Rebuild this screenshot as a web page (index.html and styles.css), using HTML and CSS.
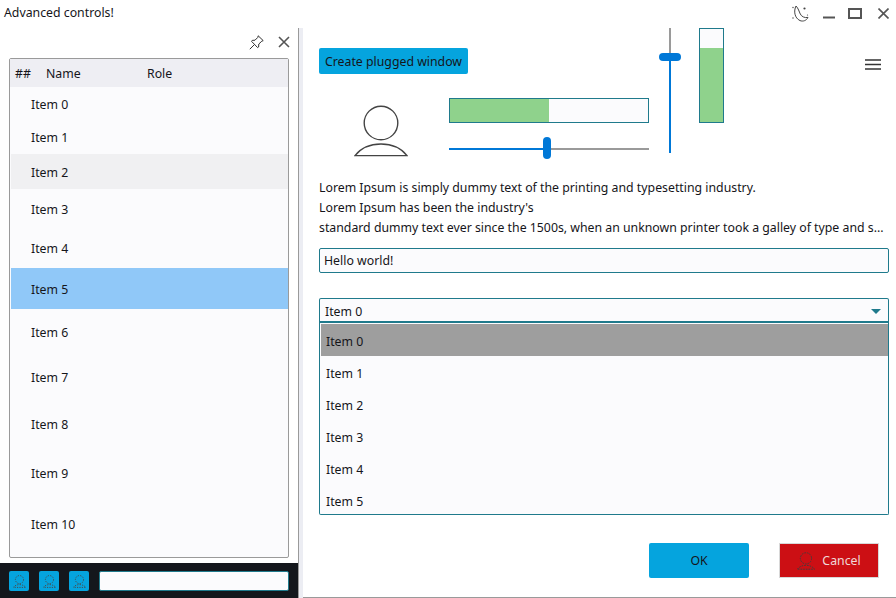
FILE: index.html
```html
<!DOCTYPE html>
<html lang="en">
<head>
    <meta charset="UTF-8">
    <meta name="viewport" content="width=device-width, initial-scale=1.0">
    <title>Advanced controls!</title>
    <link rel="stylesheet" href="styles.css">
</head>
<body>
    <svg class="defs" width="0" height="0">
        <symbol id="person" viewBox="0 0 54 52">
            <circle cx="27" cy="18" r="16.8"/>
            <path d="M1 50.6 C7 43 16 39 27 39 C38 39 47 43 53 50.6 Z"/>
        </symbol>
    </svg>

    <header class="titlebar">
        <span class="title">Advanced controls!</span>
        <div class="window-icons">
            <svg class="moon" width="17" height="17" viewBox="0 0 17 17">
                <path d="M4 1 C1.5 6 2.5 13 8 15.6 C11 16.8 14.5 15.6 16 12.4 C12.5 13.2 9.5 11.5 8.3 9 C7 6.5 6.5 3.5 4 1 Z"/>
                <circle cx="12.5" cy="3.5" r="1.1" class="dot"/>
                <circle cx="1" cy="2.5" r=".7" class="dot"/>
                <circle cx="1" cy="13" r=".7" class="dot"/>
                <circle cx="15.5" cy="10" r=".6" class="dot"/>
            </svg>
            <svg class="win-min" width="12" height="3" viewBox="0 0 12 3"><path d="M0 1.5 H12"/></svg>
            <svg class="win-max" width="14" height="11" viewBox="0 0 14 11"><rect x="1" y="1" width="12" height="9"/></svg>
            <svg class="win-close" width="11" height="11" viewBox="0 0 11 11"><path d="M.5 .5 L10.5 10.5 M10.5 .5 L.5 10.5"/></svg>
        </div>
    </header>

    <main class="main">
        <aside class="side">
            <div class="side-tools">
                <svg class="pin" width="15" height="15" viewBox="0 0 15 15">
                    <path d="M9.2 .8 L14.2 5.6 L12.8 6.2 L9.8 9 L9.6 12 L8.6 12.6 L2.6 6.4 L3.2 5.4 L6 5.2 L8.8 2.4 Z M5.2 9.8 L.8 14.2"/>
                </svg>
                <svg class="side-close" width="12" height="12" viewBox="0 0 12 12"><path d="M1 1 L11 11 M11 1 L1 11"/></svg>
            </div>
            <div class="table">
                <div class="table-head">
                    <span class="col-id">##</span>
                    <span class="col-name">Name</span>
                    <span class="col-role">Role</span>
                </div>
                <ul class="table-body">
                    <li>Item 0</li>
                    <li>Item 1</li>
                    <li class="hover">Item 2</li>
                    <li>Item 3</li>
                    <li>Item 4</li>
                    <li class="selected">Item 5</li>
                    <li>Item 6</li>
                    <li>Item 7</li>
                    <li>Item 8</li>
                    <li>Item 9</li>
                    <li>Item 10</li>
                </ul>
            </div>
            <div class="side-footer">
                <button class="icon-btn"><svg width="13" height="13"><use href="#person"/></svg></button>
                <button class="icon-btn"><svg width="13" height="13"><use href="#person"/></svg></button>
                <button class="icon-btn"><svg width="13" height="13"><use href="#person"/></svg></button>
                <input class="field footer-input" type="text">
            </div>
        </aside>

        <div class="splitter"></div>

        <section class="content">
            <div class="top">
                <div class="top-left">
                    <button class="primary plug-btn">Create plugged window</button>
                    <div class="widgets">
                        <svg class="avatar" width="54" height="52"><use href="#person"/></svg>
                        <div class="bars">
                            <div class="progress"><div class="progress-fill"></div></div>
                            <div class="hslider"><div class="hslider-done"></div><div class="hslider-thumb"></div></div>
                        </div>
                    </div>
                </div>
                <div class="vslider"><div class="vslider-thumb"></div></div>
                <div class="vprogress"><div class="vprogress-fill"></div></div>
                <svg class="menu" width="16" height="11" viewBox="0 0 16 11"><path d="M0 1 H16 M0 5.5 H16 M0 10 H16"/></svg>
            </div>

            <div class="lorem">
                <p>Lorem Ipsum is simply dummy text of the printing and typesetting industry.</p>
                <p>Lorem Ipsum has been the industry's</p>
                <p>standard dummy text ever since the 1500s, when an unknown printer took a galley of type and s...</p>
            </div>

            <input class="field hello" type="text" value="Hello world!">

            <div class="combo">
                <span>Item 0</span>
                <span class="caret"></span>
            </div>
            <ul class="combo-list">
                <li class="current">Item 0</li>
                <li>Item 1</li>
                <li>Item 2</li>
                <li>Item 3</li>
                <li>Item 4</li>
                <li>Item 5</li>
            </ul>

            <div class="actions">
                <button class="primary ok">OK</button>
                <button class="cancel"><svg width="18" height="18"><use href="#person"/></svg>Cancel</button>
            </div>
        </section>
    </main>
</body>
</html>
```

FILE: styles.css
```css
* {
    box-sizing: border-box;
}
html, body {
    height: 100%;
}
body {
    margin: 0;
    background: #ffffff;
    color: #15151a;
    font-family: "Noto Sans", "Open Sans", sans-serif;
    font-size: 12.3px;
    overflow: hidden;
}
.defs {
    display: block;
    height: 0;
}
svg {
    display: block;
    fill: none;
    stroke: #444;
}
symbol {
    overflow: visible;
}
button, input {
    font: inherit;
    color: inherit;
}
ul {
    list-style: none;
    margin: 0;
    padding: 0;
}
p {
    margin: 0;
}

/* Title bar */
.titlebar {
    height: 28px;
    display: flex;
    justify-content: space-between;
    padding: 5px 7px 0 4px;
}
.title {
    line-height: 16px;
}
.window-icons {
    display: flex;
    align-items: flex-start;
}
.moon {
    stroke-width: 1;
    margin-right: 14px;
}
.moon .dot {
    fill: #444;
    stroke: none;
}
.win-min {
    margin: 11px 13px 0 0;
    stroke: #555;
    stroke-width: 2;
}
.win-max {
    margin: 3px 16px 0 0;
    stroke: #555;
    stroke-width: 2;
}
.win-close {
    margin-top: 3px;
    stroke: #555;
    stroke-width: 1.6;
}

/* Layout */
.main {
    height: 570px;
    display: flex;
}
.side {
    width: 298px;
    display: flex;
    flex-direction: column;
}
.splitter {
    width: 5px;
    background: #ecedf3;
    border-left: 1px solid #9a9a9a;
}
.content {
    flex: 1;
    padding: 0 7px 0 16px;
    border-bottom: 1px solid #9a9a9a;
}

/* Left panel */
.side-tools {
    height: 30px;
    display: flex;
    align-items: center;
    justify-content: flex-end;
    gap: 14px;
    padding: 0 8px 2px 0;
}
.pin {
    stroke-width: 1;
    stroke: #333;
}
.side-close {
    stroke: #555;
    stroke-width: 1.6;
}
.table {
    height: 500px;
    margin: 0 9px;
    background: #fbfbfd;
    border: 1px solid #9a9a9a;
    border-radius: 2px;
}
.table-head {
    height: 28px;
    display: flex;
    align-items: center;
    background: #eeeef3;
}
.col-id {
    width: 36px;
    padding-left: 5px;
}
.col-name {
    width: 101px;
}
.table-body li {
    display: flex;
    align-items: center;
    margin-left: 1px;
    padding-left: 20px;
    height: 40px;
}
.table-body li:nth-child(1) { height: 34px; }
.table-body li:nth-child(2) { height: 33px; }
.table-body li:nth-child(3) { height: 35px; padding-top: 2px; }
.table-body li:nth-child(5) { height: 39px; }
.table-body li:nth-child(6) { height: 41px; padding-top: 2px; }
.table-body li:nth-child(7) { height: 46px; }
.table-body li:nth-child(8) { height: 45px; }
.table-body li:nth-child(9) { height: 48px; }
.table-body li:nth-child(10) { height: 50px; }
.table-body li:nth-child(11) { height: 52px; }
.table-body .hover {
    background: #f0f0f2;
}
.table-body .selected {
    background: #90c8f8;
}
.side-footer {
    height: 35px;
    margin-top: 5px;
    background: #14171c;
    display: flex;
    align-items: center;
    gap: 10px;
    padding: 0 9px;
}
.icon-btn {
    width: 20px;
    height: 20px;
    padding: 4px 3.5px 3px;
    border: 0;
    border-radius: 2px;
    background: #05a4de;
}
.icon-btn svg {
    stroke: #4a4a4a;
    stroke-dasharray: 5 5;
    stroke-width: 4;
}
.field {
    background: #fbfbfd;
    border: 1px solid #1f7a8c;
    border-radius: 2px;
    padding: 0 4px;
    outline: none;
}
.footer-input {
    flex: 1;
    min-width: 0;
    height: 20px;
}

/* Top of the right panel */
.top {
    height: 125px;
    display: flex;
    align-items: flex-start;
}
.top-left {
    width: 330px;
    padding-top: 20px;
}
.primary {
    background: #05a4de;
    border: 0;
    border-radius: 2px;
    padding: 0;
}
.plug-btn {
    display: block;
    width: 149px;
    height: 26px;
}
.widgets {
    display: flex;
    margin-top: 24px;
}
.avatar {
    margin: 7px 0 0 35px;
    stroke-width: 1.4;
}
.bars {
    width: 200px;
    margin-left: 41px;
}
.progress {
    height: 25px;
    background: #fbfbfd;
    border: 1px solid #1f7a8c;
}
.progress-fill {
    width: 50%;
    height: 100%;
    background: #8fd28c;
}
.hslider {
    position: relative;
    height: 2px;
    margin-top: 25px;
    background: #9a9a9a;
}
.hslider-done {
    width: 98px;
    height: 2px;
    background: #0078d7;
}
.hslider-thumb {
    position: absolute;
    left: 94px;
    top: -11px;
    width: 8px;
    height: 22px;
    border-radius: 4px;
    background: #0078d7;
}
.vslider {
    position: relative;
    width: 2px;
    height: 125px;
    margin-left: 20px;
    background: linear-gradient(#9a9a9a 0 29px, #0078d7 29px);
}
.vslider-thumb {
    position: absolute;
    left: -10px;
    top: 25px;
    width: 22px;
    height: 8px;
    border-radius: 4px;
    background: #0078d7;
}
.vprogress {
    width: 25px;
    height: 95px;
    margin-left: 28px;
    padding-top: 19px;
    background: #fbfbfd;
    border: 1px solid #1f7a8c;
}
.vprogress-fill {
    height: 100%;
    background: #8fd28c;
}
.menu {
    margin: 31px 0 0 141px;
    stroke: #333;
    stroke-width: 1.4;
}

/* Text and inputs */
.lorem {
    margin-top: 25px;
    line-height: 20px;
    width: 570px;
    margin-bottom: -1px;
}
.lorem p {
    white-space: nowrap;
}
.hello {
    display: block;
    width: 570px;
    height: 25px;
    margin-top: 11px;
}
.combo {
    width: 570px;
    height: 25px;
    margin-top: 25px;
    display: flex;
    align-items: center;
    justify-content: space-between;
    padding: 2px 7px 0 5px;
    background: #fbfbfd;
    border: 1px solid #1f7a8c;
    border-bottom-width: 2px;
    border-radius: 2px 2px 0 0;
}
.caret {
    border-left: 5px solid transparent;
    border-right: 5px solid transparent;
    border-top: 5px solid #1f7a8c;
}
.combo-list {
    width: 570px;
    height: 192px;
    padding: 1px 0 1px 1px;
    background: #fbfbfd;
    border: 1px solid #1f7a8c;
    border-top: 0;
    border-radius: 0 0 2px 2px;
}
.combo-list li {
    height: 32px;
    display: flex;
    align-items: center;
    padding: 2px 0 0 5px;
}
.combo-list .current {
    background: #9e9e9e;
}
.actions {
    display: flex;
    gap: 30px;
    margin: 28px 0 0 330px;
}
.ok {
    width: 100px;
    height: 35px;
}
.cancel {
    width: 100px;
    height: 35px;
    display: flex;
    align-items: center;
    justify-content: center;
    gap: 7px;
    padding: 0;
    color: #f0d8d8;
    background: #cc0f14;
    border: 1px solid #d8d8d8;
}
.cancel svg {
    stroke: #4a3a3a;
    stroke-dasharray: 5 3;
    stroke-width: 3;
}
```
